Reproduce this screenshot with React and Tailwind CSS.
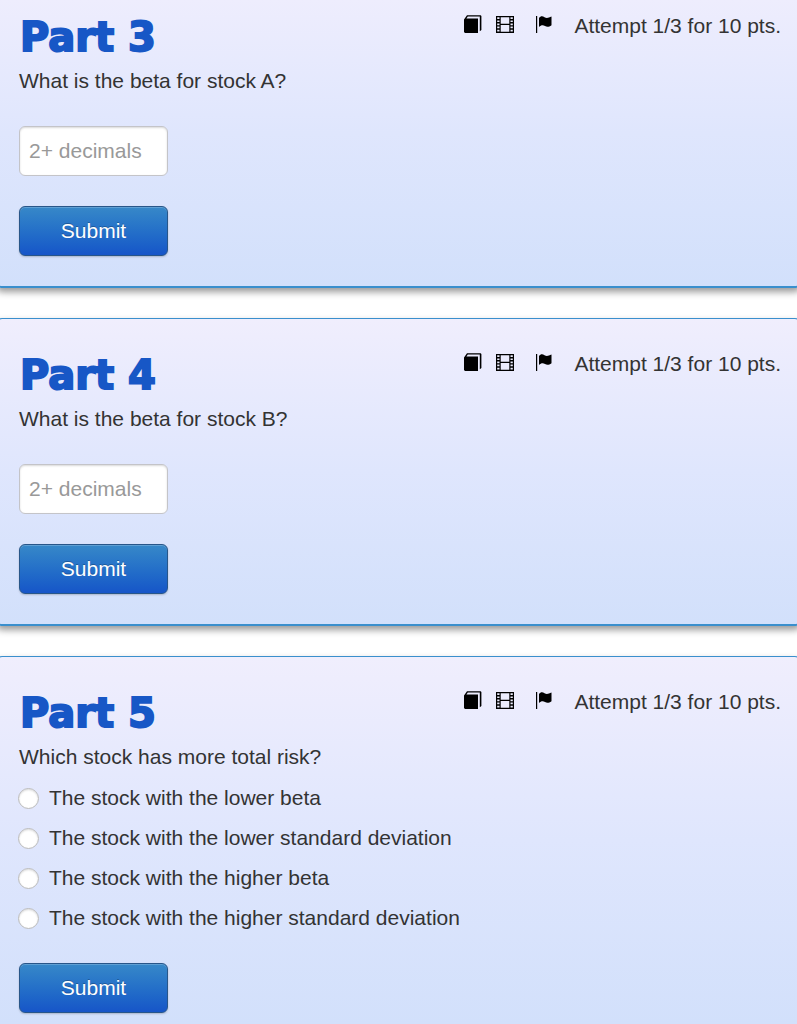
const parts = [
  { number: 3, question: "What is the beta for stock A?" },
  { number: 4, question: "What is the beta for stock B?" },
  {
    number: 5,
    question: "Which stock has more total risk?",
    choices: [
      "The stock with the lower beta",
      "The stock with the lower standard deviation",
      "The stock with the higher beta",
      "The stock with the higher standard deviation",
    ],
  },
];

function BookIcon() {
  return (
    <svg width="18" height="18" viewBox="0 0 18 18" aria-hidden="true">
      <path d="M0 4.5 3 .3H16.7L17.4 1V15L15.8 16.3V1.6H3.8L2.4 3.4H14V18H1L0 17Z" />
    </svg>
  );
}

function FilmIcon() {
  return (
    <svg width="18" height="18" viewBox="0 0 18 18" aria-hidden="true">
      <path
        fillRule="evenodd"
        d="M0 1H18V18H0ZM4.7 2.2V8.8H13.3V2.2ZM4.7 10V16.8H13.3V10ZM1.2 2.3V4H3.5V2.3ZM1.2 5.4V7.1H3.5V5.4ZM1.2 8.5V10.2H3.5V8.5ZM1.2 11.6V13.3H3.5V11.6ZM1.2 14.7V16.4H3.5V14.7ZM14.5 2.3V4H16.8V2.3ZM14.5 5.4V7.1H16.8V5.4ZM14.5 8.5V10.2H16.8V8.5ZM14.5 11.6V13.3H16.8V11.6ZM14.5 14.7V16.4H16.8V14.7Z"
      />
    </svg>
  );
}

function FlagIcon() {
  return (
    <svg width="16" height="18" viewBox="0 0 16 18" aria-hidden="true">
      <path d="M0 1H1.2V18H0Z" />
      <path d="M3 3C4.5 1 6.5 .9 8.5 2.2C10.5 3.4 12.5 2.9 15.5 1.6V10.2C13 12 11 12.2 9 11C7 9.8 5 10 3 12Z" />
    </svg>
  );
}

function AttemptInfo() {
  return (
    <div className="flex items-start pt-0.5">
      <a href="#reading" aria-label="Reading" className="mr-[14px]">
        <BookIcon />
      </a>
      <a href="#video" aria-label="Video" className="mr-[22px]">
        <FilmIcon />
      </a>
      <a href="#report" aria-label="Report a problem" className="mr-[22px]">
        <FlagIcon />
      </a>
      <span className="leading-[22px] whitespace-nowrap">Attempt 1/3 for 10 pts.</span>
    </div>
  );
}

function Part({ number, question, choices }) {
  const answerId = `answer-${number}`;

  return (
    <form
      onSubmit={(e) => e.preventDefault()}
      className="-mx-1 rounded-md border border-b-2 border-[#3a8fcd] bg-linear-to-b from-[#f0eefd] via-[#dfe6fd] to-[#d2e0fb] pt-8 pr-[19px] pb-[30px] pl-[22px] shadow-[0_4px_7px_rgba(0,0,0,0.4)] last:rounded-b-none last:border-b-0 last:pb-[11px]"
    >
      <div className="flex items-start justify-between">
        <h2 className="pl-px font-['DejaVu_Sans',sans-serif] text-[40px] leading-[48px] font-bold text-[#1757c6] [-webkit-text-stroke:2px_#1757c6]">
          Part {number}
        </h2>
        <AttemptInfo />
      </div>

      {choices ? (
        <fieldset>
          <legend className="pb-px leading-10">{question}</legend>
          {choices.map((choice) => (
            <label key={choice} className="flex h-10 items-center gap-[10px]">
              <input
                type="radio"
                name={answerId}
                className="-ml-px size-[21px] appearance-none rounded-full border border-[#bbb] bg-white shadow-[inset_0_1px_2px_rgba(0,0,0,0.15)] checked:border-[6px] checked:border-[#1757c6]"
              />
              {choice}
            </label>
          ))}
        </fieldset>
      ) : (
        <>
          <label htmlFor={answerId} className="block leading-10">
            {question}
          </label>
          <input
            id={answerId}
            type="text"
            placeholder="2+ decimals"
            className="mt-[25px] block h-[50px] w-[149px] rounded-md border border-[#c4c4c8] bg-white px-[9px] shadow-[inset_0_1px_2px_rgba(0,0,0,0.15)] placeholder:text-[#999]"
          />
        </>
      )}

      <button
        type="submit"
        className={`block h-[50px] w-[149px] rounded-md border border-[#285689] bg-linear-to-b from-[#3788c8] to-[#1755c8] text-white shadow-[inset_0_1px_0_rgba(255,255,255,0.2),0_1px_2px_rgba(0,0,0,0.2)] [text-shadow:0_-1px_0_rgba(0,0,0,0.25)] ${
          choices ? "mt-[25px]" : "mt-[30px]"
        }`}
      >
        Submit
      </button>
    </form>
  );
}

export default function App() {
  return (
    <main className="-mt-5 flex flex-col gap-[30px] overflow-x-clip bg-white font-['Liberation_Sans',Arial,sans-serif] text-[21px] text-[#333]">
      {parts.map((part) => (
        <Part key={part.number} {...part} />
      ))}
    </main>
  );
}
